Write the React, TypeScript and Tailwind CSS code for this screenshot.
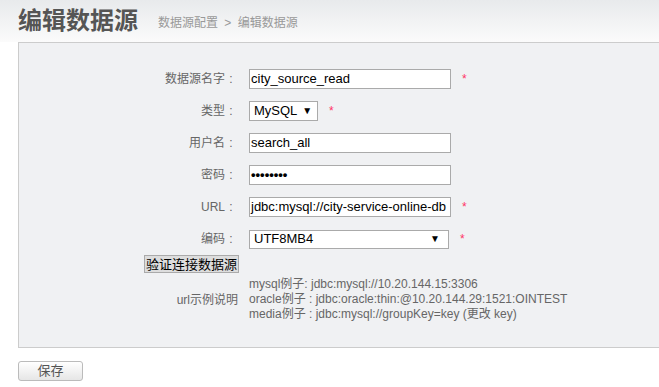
import React from 'react'

const FONT = { fontFamily: '"Liberation Sans", Arial, "Noto Sans CJK SC", sans-serif' }

function Star({ className = '' }: { className?: string }) {
  return <span className={`text-[12px] text-[#ff3366] ${className}`}>*</span>
}

function Row({ label, children }: { label: string; children: React.ReactNode }) {
  return (
    <div className="flex items-center h-[20px] mb-[12px]">
      <label className="w-[230px] pr-[12px] flex justify-end text-[12px] text-[#666]">
        {label}
        <span className="inline-block w-[12px] text-center">:</span>
      </label>
      {children}
    </div>
  )
}

function Caret() {
  return <span className="text-[10px] text-black leading-none">▼</span>
}

const box = 'h-[20px] border border-[#aaa] bg-white flex items-center text-[13px] text-black'

export default function App() {
  return (
    <div className="w-[659px] h-[387px] bg-white overflow-hidden" style={FONT}>
      {/* Header */}
      <div className="h-[42px] flex items-end px-[18px] bg-gradient-to-b from-[#e8eaec] to-[#fbfbfb]">
        <h1 className="text-[24px] font-bold text-[#555] leading-none pb-[9px]">编辑数据源</h1>
        <div className="ml-[20px] pb-[10px] text-[12px] text-[#999]">
          数据源配置 <span className="mx-[3px]">&gt;</span> 编辑数据源
        </div>
      </div>

      {/* Form panel */}
      <div className="ml-[18px] h-[306px] border-l border-t border-b border-[#ccc] bg-[#f0f1f3] pt-[26px]">
        <Row label="数据源名字">
          <div className={`w-[202px] pl-[1px] ${box}`}>city_source_read</div>
          <Star className="ml-[11px]" />
        </Row>
        <Row label="类型">
          <div className={`w-[69px] pl-[4px] gap-[5px] ${box}`}>
            MySQL <Caret />
          </div>
          <Star className="ml-[11px]" />
        </Row>
        <Row label="用户名">
          <div className={`w-[202px] pl-[1px] ${box}`}>search_all</div>
        </Row>
        <Row label="密码">
          <div className={`w-[202px] pl-[1px] font-bold ${box}`}>••••••••</div>
        </Row>
        <Row label="URL">
          <div className={`w-[202px] pl-[1px] whitespace-nowrap overflow-hidden ${box}`}>
            jdbc:mysql://city-service-online-db
          </div>
          <Star className="ml-[11px]" />
        </Row>
        <Row label="编码">
          <div className={`w-[200px] !h-[19px] justify-between pl-[4px] pr-[8px] ${box}`}>
            UTF8MB4 <Caret />
          </div>
          <Star className="ml-[11px]" />
        </Row>

        <div className="flex -mt-[6px]">
          <div className="w-[220px] flex justify-end">
            <button className="h-[18px] px-[1px] bg-[#dddddd] border border-[#aaa] text-[13px] leading-none text-black">
              验证连接数据源
            </button>
          </div>
        </div>

        <div className="flex items-center mt-[4px]">
          <div className="w-[230px] pr-[11px] text-right text-[12px] text-[#666]">url示例说明</div>
          <div className="text-[12px] leading-[15px] text-[#666]">
            <div>mysql例子: jdbc:mysql://10.20.144.15:3306</div>
            <div>oracle例子 : jdbc:oracle:thin:@10.20.144.29:1521:OINTEST</div>
            <div>media例子 : jdbc:mysql://groupKey=key (更改 key)</div>
          </div>
        </div>
      </div>

      <div className="pl-[18px] pt-[10px]">
        <button className="w-[65px] h-[20px] rounded-[3px] border border-[#bbb] bg-gradient-to-b from-white to-[#e6e6e6] text-[13px] text-[#555] leading-none">
          保存
        </button>
      </div>
    </div>
  )
}
